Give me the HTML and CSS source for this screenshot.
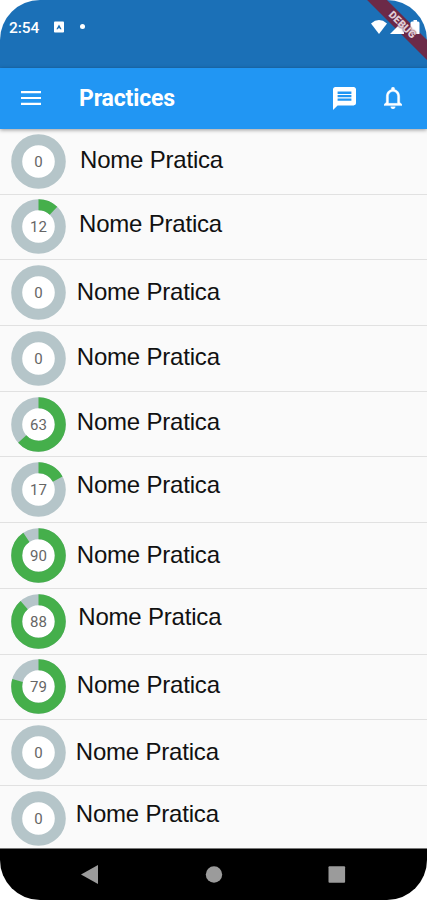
FILE: index.html
```html
<!DOCTYPE html>
<html lang="en">
<head>
<meta charset="utf-8">
<title>Practices</title>
<link rel="stylesheet" href="styles.css">
</head>
<body>
<div class="phone">
  <header class="status">
    <span class="clock">2:54</span>
    <svg class="status-app" viewBox="0 0 11 12"><rect width="11" height="12" rx="1" fill="#fff"/><path d="M2.6 8.5 5.5 3.2 8.4 8.5H6.8L5.5 6.8 4.2 8.5z" fill="#1b70b7"/></svg>
    <span class="dot"></span>
    <svg class="signals" viewBox="0 0 50 16"><path d="M0 4.500Q8-2.300 16 4.500L8 15z"/><path d="M33 1V15H19z"/><path d="M41 2.500h1.500V1h3.500v1.500h1q1.500 0 1.500 1.500V15H39.500V4q0-1.500 1.500-1.500z"/></svg>
    <div class="debug band"></div>
    <div class="debug label">DEBUG</div>
  </header>
  <nav class="appbar">
    <svg class="menu" viewBox="0 0 20 14"><path d="M0 1.200h20M0 7h20M0 12.800h20"/></svg>
    <h1>Practices</h1>
    <svg class="chat" viewBox="2 2 20 20"><path d="M20 2H4c-1.100 0-1.990.9-1.990 2L2 22l4-4h14c1.100 0 2-.9 2-2V4c0-1.100-.9-2-2-2zm-2 12H6v-2h12v2zm0-3H6V9h12v2zm0-3H6V6h12v2z"/></svg>
    <svg class="bell" viewBox="4 2.500 16 19.500"><path d="M12 22c1.100 0 2-.9 2-2h-4c0 1.100.9 2 2 2zm6-6v-5c0-3.070-1.630-5.640-4.500-6.320V4c0-.83-.67-1.500-1.500-1.500s-1.500.67-1.500 1.500v.68C7.640 5.360 6 7.920 6 11v5l-2 2v1h16v-1l-2-2zm-2 1H8v-6c0-2.480 1.510-4.500 4-4.500s4 2.020 4 4.500v6z"/></svg>
  </nav>
  <main class="list" id="list"></main>
  <footer class="navbar">
    <svg viewBox="0 0 18 20"><path d="M17 0V19L0 9.500z"/></svg>
    <svg viewBox="0 0 18 20"><circle cx="9" cy="9.500" r="8.200"/></svg>
    <svg viewBox="0 0 18 20"><rect x="0.500" y="1.200" width="16.600" height="16.600" rx="1"/></svg>
  </footer>
</div>
<script src="app.js"></script>
</body>
</html>
```
FILE: styles.css
```css
* { box-sizing: border-box; }
body { margin: 0; background: #fff; font-family: Roboto, sans-serif; }
.phone {
  width: 427px;
  height: 900px;
  display: flex;
  flex-direction: column;
  overflow: hidden;
  border-radius: 40px;
  background: #fafafa;
}
.status {
  position: relative;
  flex: none;
  height: 68px;
  padding: 19px 6px 0 9px;
  display: flex;
  align-items: flex-start;
  background: #1b70b7;
  color: #fff;
}
.clock { width: 45px; font-size: 15.500px; line-height: 19px; font-weight: 500; letter-spacing: -0.1px; }
.status-app { width: 10px; height: 12px; margin-top: 2px; }
.dot { width: 5px; height: 5px; margin: 5px 0 0 16px; border-radius: 50%; background: #fff; }
.signals { position: relative; z-index: 2; width: 50px; height: 16px; margin-left: auto; fill: #fff; }
.debug {
  position: absolute;
  left: 341px;
  top: 17px;
  width: 120px;
  height: 14px;
  padding-left: 3px;
  transform: rotate(45deg);
  font-size: 10.5px;
  line-height: 14px;
  font-weight: 900;
  text-align: center;
}
.band { z-index: 1; background: #6c2a48; }
.label { z-index: 3; color: #e0cdd6; text-shadow: 0 0 1px #6c2a48, 0 0 2px #6c2a48; }
.appbar {
  position: relative;
  z-index: 1;
  flex: none;
  height: 61px;
  padding: 0 25px 0 21px;
  display: flex;
  align-items: center;
  background: #2196f3;
  color: #fff;
  box-shadow: 0 1px 4px rgba(0, 0, 0, 0.4);
}
.menu { width: 20px; height: 14px; margin-bottom: 1px; stroke: #fff; stroke-width: 2.200; }
.appbar h1 { flex: 1; margin: 0 0 0 38px; font-size: 23px; line-height: 28px; font-weight: 700; letter-spacing: -0.15px; }
.chat { width: 23px; height: 23px; margin: 0 28px 1px 0; fill: #fff; }
.bell { width: 18px; height: 22px; margin-bottom: 1px; fill: #fff; stroke: #fff; stroke-width: 0.300; }
.list { flex: 1; min-height: 0; overflow: hidden; }
.row {
  height: 65.700px;
  padding-left: 11px;
  display: flex;
  align-items: flex-start;
  border-bottom: 1.500px solid #e1e1e1;
}
.ring { flex: none; width: 55px; height: 55px; margin-top: 4.800px; }
.track, .value { fill: none; stroke-width: 11; }
.track { stroke: #b5c5c9; }
.value { stroke: #45af4b; }
.ring text { font: 400 15px Roboto, sans-serif; letter-spacing: 0.2px; fill: #666; text-anchor: middle; }
.name { color: #111; font: 24px/28px "Liberation Sans", Arial, sans-serif; letter-spacing: -0.2px; white-space: nowrap; }
.navbar {
  flex: none;
  height: 52px;
  padding: 1px 81px 0;
  display: flex;
  align-items: center;
  justify-content: space-between;
  background: #000;
  border-top: 1px solid #777;
}
.navbar svg { width: 18px; height: 20px; fill: #9b9b9b; }
```
FILE: app.js
```js
// Each practice: completion percentage, label left gap, label top gap.
const practices = [
  [0, 14, 17], [12, 13, 15], [0, 10.8, 17.5], [0, 10.8, 17], [63, 10.8, 16.3],
  [17, 10.8, 13.5], [90, 10.8, 17.5], [88, 12.3, 13.8], [79, 10.8, 16.3], [0, 9.8, 18], [0, 9.8, 14]
];
const length = 2 * Math.PI * 21.8;
document.getElementById("list").innerHTML = practices.map(([value, left, top]) => `
  <div class="row">
    <svg class="ring" viewBox="0 0 55 55">
      <circle cx="27.5" cy="27.5" r="17" fill="#fff"/>
      <circle class="track" cx="27.5" cy="27.5" r="21.8"/>
      <circle class="value" cx="27.5" cy="27.5" r="21.8" transform="rotate(-90 27.5 27.5)" stroke-dasharray="${length * value / 100} ${length}" ${value ? "" : 'visibility="hidden"'}/>
      <text x="27.6" y="33">${value}</text>
    </svg>
    <span class="name" style="margin:${top}px 0 0 ${left}px">Nome Pratica</span>
  </div>`).join("");
```
